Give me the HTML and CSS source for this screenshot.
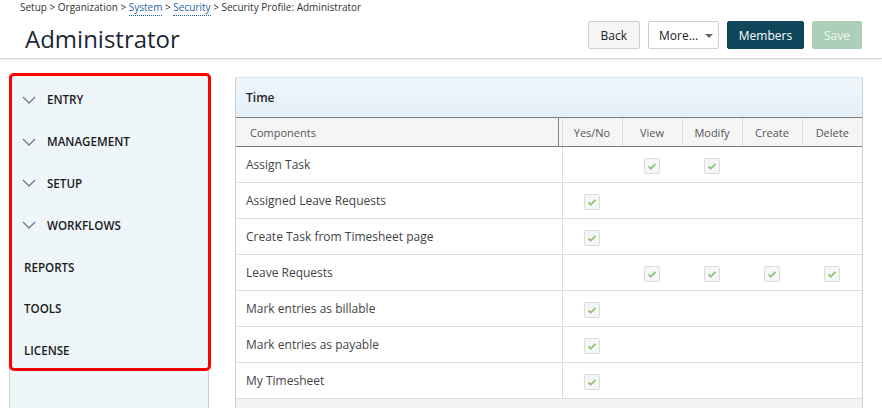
FILE: index.html
```html
<!DOCTYPE html>
<html>
<head>
<meta charset="utf-8">
<link rel="stylesheet" href="styles.css">
</head>
<body>
<header class="top">
  <div class="titles">
    <div class="crumbs">Setup &gt; Organization &gt; <a>System</a> &gt; <a>Security</a> &gt; Security Profile: Administrator</div>
    <h1 class="title">Administrator</h1>
  </div>
  <div class="actions">
    <button class="btn">Back</button>
    <button class="btn more">More... <span class="caret"></span></button>
    <button class="btn primary">Members</button>
    <button class="btn save">Save</button>
  </div>
</header>
<div class="content">
  <aside class="side">
    <ul class="nav">
      <li class="group"><svg class="chev" viewBox="0 0 14 8" width="14" height="8"><path d="M1 1l6 6 6-6" fill="none" stroke="#6b7a86" stroke-width="1.3"/></svg>ENTRY</li>
      <li class="group"><svg class="chev" viewBox="0 0 14 8" width="14" height="8"><path d="M1 1l6 6 6-6" fill="none" stroke="#6b7a86" stroke-width="1.3"/></svg>MANAGEMENT</li>
      <li class="group"><svg class="chev" viewBox="0 0 14 8" width="14" height="8"><path d="M1 1l6 6 6-6" fill="none" stroke="#6b7a86" stroke-width="1.3"/></svg>SETUP</li>
      <li class="group"><svg class="chev" viewBox="0 0 14 8" width="14" height="8"><path d="M1 1l6 6 6-6" fill="none" stroke="#6b7a86" stroke-width="1.3"/></svg>WORKFLOWS</li>
      <li class="leaf">REPORTS</li>
      <li class="leaf">TOOLS</li>
      <li class="leaf">LICENSE</li>
    </ul>
  </aside>
  <section class="panel">
    <div class="panel-head">Time</div>
    <table class="grid">
      <colgroup><col class="c-name"><col class="c-perm"><col class="c-perm"><col class="c-perm"><col class="c-perm"><col class="c-perm"></colgroup>
      <thead>
        <tr><th class="name-h">Components<span class="handle"></span></th><th>Yes/No</th><th>View</th><th>Modify</th><th>Create</th><th>Delete</th></tr>
      </thead>
      <tbody>
        <tr><td class="name">Assign Task</td><td></td><td><span class="cb"></span></td><td><span class="cb"></span></td><td></td><td></td></tr>
        <tr><td class="name">Assigned Leave Requests</td><td><span class="cb"></span></td><td></td><td></td><td></td><td></td></tr>
        <tr><td class="name">Create Task from Timesheet page</td><td><span class="cb"></span></td><td></td><td></td><td></td><td></td></tr>
        <tr><td class="name">Leave Requests</td><td></td><td><span class="cb"></span></td><td><span class="cb"></span></td><td><span class="cb"></span></td><td><span class="cb"></span></td></tr>
        <tr><td class="name">Mark entries as billable</td><td><span class="cb"></span></td><td></td><td></td><td></td><td></td></tr>
        <tr><td class="name">Mark entries as payable</td><td><span class="cb"></span></td><td></td><td></td><td></td><td></td></tr>
        <tr><td class="name">My Timesheet</td><td><span class="cb"></span></td><td></td><td></td><td></td><td></td></tr>
      </tbody>
    </table>
    <div class="panel-foot"></div>
  </section>
</div>
</body>
</html>
```
FILE: styles.css
```css
* { box-sizing: border-box; }
html, body { margin: 0; padding: 0; height: 100%; overflow: hidden; }
body {
  font-family: "Open Sans", "Noto Sans", sans-serif;
  background: #fff;
  color: #333;
}
.top {
  height: 59px;
  border-bottom: 1px solid #d6d6d6;
  box-shadow: 0 1px 3px rgba(0,0,0,0.08);
  display: flex;
  justify-content: space-between;
  align-items: flex-start;
  padding: 0 20px 0 20px;
}
.crumbs {
  font-size: 10px;
  line-height: 14px;
  color: #333;
}
.crumbs a {
  color: #1f5fa8;
  border-bottom: 1px dotted #1f5fa8;
  padding-bottom: 1px;
}
.title {
  margin: 10px 0 0 5px;
  font-size: 24px;
  font-weight: 400;
  line-height: 30px;
  color: #1c2833;
}
.actions {
  display: flex;
  gap: 8px;
  margin-top: 21px;
}
.btn {
  font-family: "Open Sans", "Noto Sans", sans-serif;
  font-size: 12px;
  height: 28px;
  padding: 0 12px;
  border-radius: 2px;
  border: 1px solid #cfcfcf;
  background: #f5f5f5;
  color: #222;
}
.btn.more {
  background: #fff;
  width: 71px;
  padding: 0 0 0 10px;
  text-align: left;
  position: relative;
}
.caret {
  position: absolute;
  right: 5px;
  top: 12px;
  width: 0; height: 0;
  border-left: 4px solid transparent;
  border-right: 4px solid transparent;
  border-top: 4px solid #666;
}
.btn.primary {
  background: #0e475c;
  border-color: #0e475c;
  color: #fff;
  width: 77px;
  padding: 0;
}
.btn.save {
  background: #abd0b7;
  border-color: #abd0b7;
  color: #eef6f0;
  width: 50px;
  padding: 0;
}
.content {
  display: flex;
  align-items: flex-start;
  padding: 14px 0 0 9px;
  gap: 26px;
  height: calc(100% - 59px + 4px);
}
.side {
  width: 200px;
  border: 1px solid #cfcfcf;
  border-top: none;
  border-bottom: none;
  background: #eff6fa;
  align-self: stretch;
}
.nav {
  list-style: none;
  margin: 0 -3px 0 -1px;
  padding: 3px 0 0;
  border: 3px solid #ff0000;
  border-radius: 5px;
  height: 298px;
}
.nav li {
  height: 41.8px;
  display: flex;
  align-items: center;
  font-size: 11.6px;
  font-weight: 600;
  color: #1a1a1a;
}
.nav li.group { padding-left: 10px; }
.nav li.leaf { padding-left: 12px; }
.chev { margin-right: 11px; }
.panel {
  width: 628px;
  margin-top: 4px;
  border: 1px solid #cfcfcf;
  border-top: 1px solid #d9e4ec;
}
.panel-head {
  height: 39px;
  background: linear-gradient(#f0f7fc, #e3eff8);
  font-size: 12px;
  font-weight: 600;
  color: #222;
  padding: 0 0 0 10px;
  line-height: 39px;
}
.grid {
  border-collapse: collapse;
  table-layout: fixed;
  width: 100%;
}
.c-name { width: 326px; }
.c-perm { width: 60px; }
.grid thead tr { background: #f5f5f5; height: 29px; }
.grid th {
  font-size: 11px;
  font-weight: 400;
  color: #555;
  border-top: 1px solid #7d7d7d;
  border-bottom: 1px solid #7d7d7d;
  border-left: 1px solid #dcdcdc;
  padding: 0;
  text-align: center;
}
.grid th.name-h {
  text-align: left;
  padding-left: 14px;
  border-left: none;
  position: relative;
}
.handle {
  position: absolute;
  right: 3px;
  top: 0;
  bottom: 0;
  width: 1px;
  background: #8e7fa0;
}
.grid td {
  height: 36px;
  border-bottom: 1px solid #dedede;
  padding: 0;
  text-align: center;
}
.grid td.name {
  text-align: left;
  padding-left: 10px;
  font-size: 12px;
  color: #444;
  border-right: 1px solid #dedede;
}
.cb {
  display: inline-block;
  vertical-align: middle;
  width: 16px;
  height: 16px;
  border: 1px solid #dcdcdc;
  border-radius: 2px;
  background: #f6f6f6 url("data:image/svg+xml,%3Csvg xmlns='http://www.w3.org/2000/svg' viewBox='0 0 16 16'%3E%3Cpath d='M4 8.5l2.6 2.6L12 5.6' fill='none' stroke='%2390c47c' stroke-width='2'/%3E%3C/svg%3E") center/14px 14px no-repeat;
}
.panel-foot {
  height: 12px;
  background: #f4f4f4;
}
```
